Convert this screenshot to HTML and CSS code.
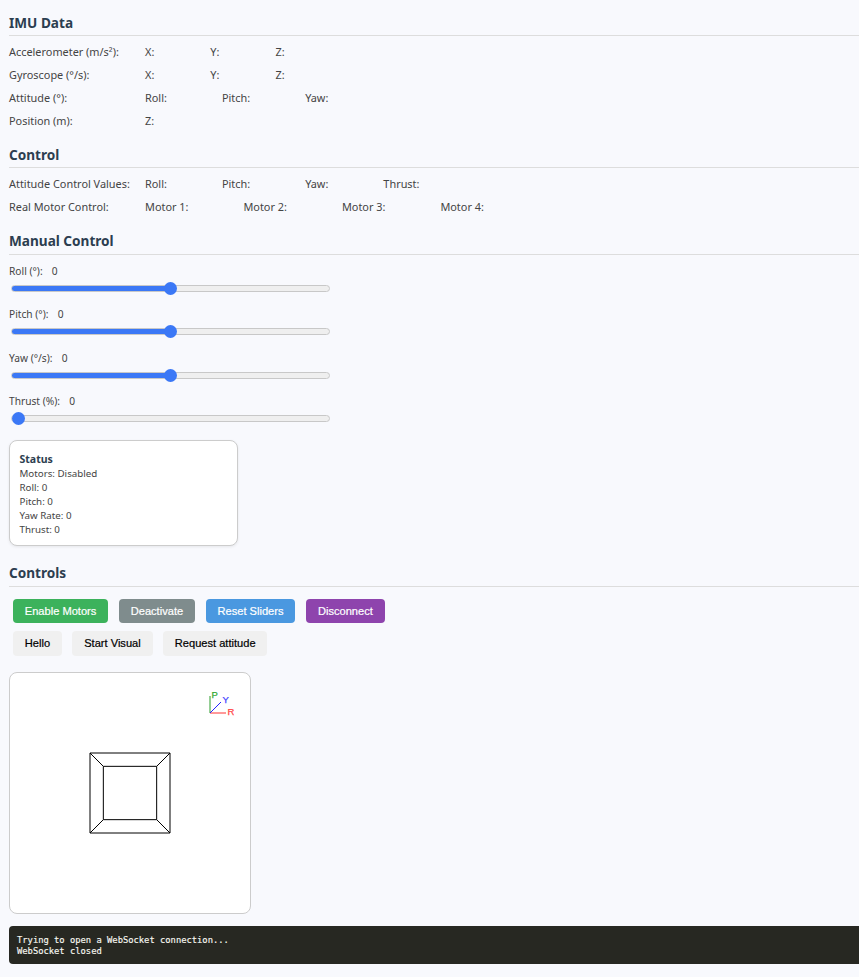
FILE: index.html
```html
<!DOCTYPE html>
<html lang="en">
<head>
<meta charset="utf-8">
<title>IMU Dashboard</title>
<link rel="stylesheet" href="styles.css">
</head>
<body>
<h2 class="heading heading-first">IMU Data</h2>
<div class="row"><span class="row-label">Accelerometer (m/s²):</span><span class="vals vals-xyz"><span>X:</span><span>Y:</span><span>Z:</span></span></div>
<div class="row"><span class="row-label">Gyroscope (°/s):</span><span class="vals vals-xyz"><span>X:</span><span>Y:</span><span>Z:</span></span></div>
<div class="row"><span class="row-label">Attitude (°):</span><span class="vals"><span>Roll:</span><span>Pitch:</span><span>Yaw:</span></span></div>
<div class="row"><span class="row-label">Position (m):</span><span class="vals"><span>Z:</span></span></div>

<h2 class="heading">Control</h2>
<div class="row"><span class="row-label">Attitude Control Values:</span><span class="vals"><span>Roll:</span><span>Pitch:</span><span>Yaw:</span><span>Thrust:</span></span></div>
<div class="row"><span class="row-label">Real Motor Control:</span><span class="vals"><span>Motor 1:</span><span>Motor 2:</span><span>Motor 3:</span><span>Motor 4:</span></span></div>

<h2 class="heading heading-manual">Manual Control</h2>
<div class="slider"><label class="slider-label">Roll (°): <span class="slider-val">0</span></label><input class="range" type="range" min="-30" max="30" value="0" style="--fill:50%"></div>
<div class="slider"><label class="slider-label">Pitch (°): <span class="slider-val">0</span></label><input class="range" type="range" min="-30" max="30" value="0" style="--fill:50%"></div>
<div class="slider"><label class="slider-label">Yaw (°/s): <span class="slider-val">0</span></label><input class="range" type="range" min="-30" max="30" value="0" style="--fill:50%"></div>
<div class="slider"><label class="slider-label">Thrust (%): <span class="slider-val">0</span></label><input class="range" type="range" min="0" max="100" value="0" style="--fill:0%"></div>

<div class="status">
<div class="status-title">Status</div>
<div>Motors: Disabled</div>
<div>Roll: 0</div>
<div>Pitch: 0</div>
<div>Yaw Rate: 0</div>
<div>Thrust: 0</div>
</div>

<h2 class="heading heading-controls">Controls</h2>
<div class="btn-row">
<button class="btn btn-green">Enable Motors</button>
<button class="btn btn-gray">Deactivate</button>
<button class="btn btn-blue">Reset Sliders</button>
<button class="btn btn-purple">Disconnect</button>
</div>
<div class="btn-row btn-row-plain">
<button class="btn btn-plain">Hello</button>
<button class="btn btn-plain">Start Visual</button>
<button class="btn btn-plain">Request attitude</button>
</div>

<div class="viewer">
<svg class="viewer-svg" width="240" height="240" viewBox="0 0 240 240">
<g class="cube">
<path d="M80 80H160V160H80Z"/>
<path d="M93.33 93.33H146.67V146.67H93.33Z"/>
<path d="M80 80L93.33 93.33M160 80L146.67 93.33M160 160L146.67 146.67M80 160L93.33 146.67"/>
</g>
<path class="axis-p" d="M200 40V23"/>
<path class="axis-r" d="M200 40H216"/>
<path class="axis-y" d="M200 40L211 29"/>
<text class="axis-text axis-text-p" x="201.5" y="25">P</text>
<text class="axis-text axis-text-y" x="212.5" y="30">Y</text>
<text class="axis-text axis-text-r" x="217.5" y="41.5">R</text>
</svg>
</div>

<pre class="log">Trying to open a WebSocket connection...
WebSocket closed</pre>
</body>
</html>
```

FILE: styles.css
```css
html, body {
  margin: 0;
  padding: 0;
}
body {
  background: #f8f9fd;
  color: #444;
  font-family: "Noto Sans", "Open Sans", sans-serif;
  font-size: 10.9px;
  padding-left: 9px;
  overflow-x: hidden;
}
.heading {
  margin: 13px 0 0;
  padding-bottom: 3px;
  height: 19px;
  line-height: 19px;
  font-size: 13.6px;
  font-weight: 700;
  color: #2c3e50;
  border-bottom: 1px solid #ddd;
  box-sizing: content-box;
}
.heading-manual {
  padding-bottom: 4px;
}
.heading-controls {
  margin-top: 17px;
  padding-bottom: 4px;
}
.row {
  display: flex;
  height: 23px;
  line-height: 23px;
}
.heading + .row {
  margin-top: 4px;
}
.row-label {
  width: 136px;
  flex: none;
}
.vals {
  display: flex;
  gap: 55px;
}
.vals-xyz {
  gap: 56px;
}
.slider {
  height: 43.5px;
}
.slider-label {
  display: block;
  height: 17px;
  line-height: 17px;
  font-size: 10.2px;
  padding-top: 7.5px;
}
.slider-val {
  margin-left: 6.5px;
}
.range {
  display: block;
  width: 319px;
  height: 16px;
  margin: 0.5px 2px 0;
  background: transparent;
  appearance: none;
  -webkit-appearance: none;
}
.range::-webkit-slider-runnable-track {
  height: 7px;
  box-sizing: border-box;
  border: 1px solid #c8c8c8;
  border-radius: 4px;
  background: linear-gradient(to right, #3b78f6 var(--fill), #efefef var(--fill));
}
.range::-webkit-slider-thumb {
  -webkit-appearance: none;
  appearance: none;
  width: 13px;
  height: 13px;
  margin-top: -4px;
  border: 0;
  border-radius: 50%;
  background: #3b78f6;
}
.status {
  width: 207.5px;
  height: 84px;
  margin-top: 11px;
  padding: 11px 10px 9px 9.5px;
  background: #fff;
  border: 1px solid #ccc;
  border-radius: 8px;
  box-shadow: 0 1px 3px rgba(0, 0, 0, 0.08);
  font-size: 9.75px;
  line-height: 14px;
  color: #444;
}
.status-title {
  margin-bottom: 1px;
  font-size: 10.5px;
  font-weight: 700;
  color: #2c3e50;
}
.btn-row {
  display: flex;
  gap: 10.8px;
  margin: 12px 0 0 4px;
}
.btn-row-plain {
  margin-top: 8px;
  gap: 10.5px;
}
.btn {
  height: 24px;
  padding: 0 11.8px 1px;
  border: 0;
  border-radius: 4px;
  font-family: "Liberation Sans", Arial, sans-serif;
  font-size: 11.1px;
  color: #fff;
  -webkit-text-stroke: 0.2px currentColor;
}
.btn-green { background: #3cb25c; }
.btn-gray { background: #7f8c8d; }
.btn-blue { background: #4a98e0; }
.btn-purple { background: #8e44ad; }
.btn-plain {
  height: 25px;
  background: #f0f0f0;
  color: #000;
}
.viewer {
  width: 240px;
  height: 240px;
  margin-top: 16px;
  background: #fff;
  border: 1px solid #ccc;
  border-radius: 8px;
}
.viewer-svg {
  display: block;
}
.cube {
  fill: none;
  stroke: #000;
  stroke-width: 1;
}
.axis-p { stroke: #2a9d2a; stroke-width: 1; fill: none; }
.axis-r { stroke: #f33; stroke-width: 1; fill: none; }
.axis-y { stroke: #22f; stroke-width: 1; fill: none; }
.axis-text {
  font-family: "Liberation Sans", Arial, sans-serif;
  font-size: 9.5px;
  stroke-width: 0.25px;
}
.axis-text-p { fill: #3a3; stroke: #3a3; }
.axis-text-y { fill: #44f; stroke: #44f; }
.axis-text-r { fill: #f44; stroke: #f44; }
.log {
  margin: 12px 0 13px;
  height: 23px;
  padding: 9px 8px 6px;
  background: #272822;
  color: #f8f8f2;
  border-radius: 4px 0 0 4px;
  font-family: "DejaVu Sans Mono", monospace;
  font-size: 8.8px;
  line-height: 11px;
  -webkit-text-stroke: 0.15px currentColor;
}
```
